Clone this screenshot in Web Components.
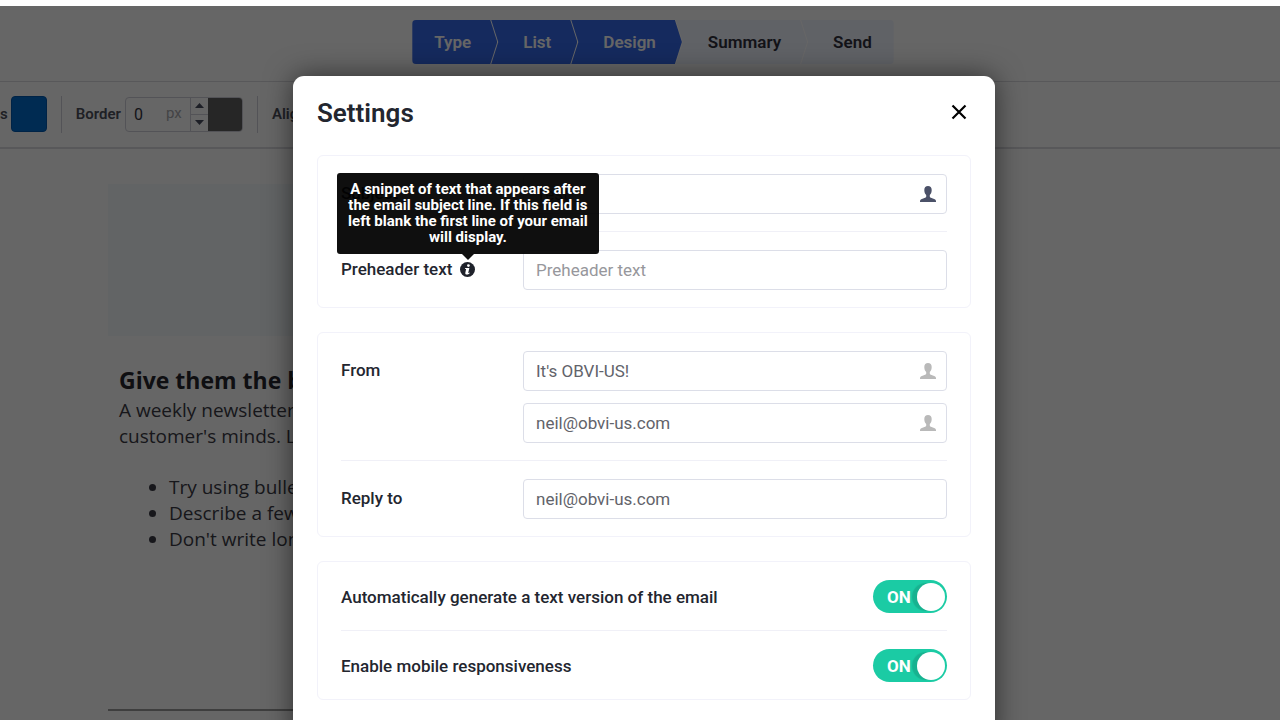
<!DOCTYPE html>
<html lang="en">
<head>
<meta charset="utf-8">
<title>Campaign settings</title>
<style>
  html, body { margin: 0; height: 100%; }
  body { font-family: Roboto, "Noto Sans", sans-serif; font-size: 17px; color: #23262f; background: #fff; overflow: hidden; }
</style>
</head>
<body>
<campaign-app>
  <step-nav slot="header">
    <step-item done first>Type</step-item>
    <step-item done>List</step-item>
    <step-item done>Design</step-item>
    <step-item>Summary</step-item>
    <step-item last>Send</step-item>
  </step-nav>
  <style-toolbar slot="toolbar"></style-toolbar>
  <email-canvas slot="canvas">
    <h1>Give them the b</h1>
    <p>A weekly newsletter<br>customer's minds. L</p>
    <ul>
      <li>Try using bulle</li>
      <li>Describe a few</li>
      <li>Don't write lon</li>
    </ul>
  </email-canvas>
  <settings-modal slot="modal" heading="Settings">
    <settings-card>
      <text-row label="Subject" value="Test" icon="dark"></text-row>
      <text-row label="Preheader text" placeholder="Preheader text">
        <info-tip slot="hint">A snippet of text that appears after the email subject line. If this field is left blank the first line of your email will display.</info-tip>
      </text-row>
    </settings-card>
    <settings-card>
      <text-row label="From" value="It's OBVI-US!" second="neil@obvi-us.com" icon="muted"></text-row>
      <text-row label="Reply to" value="neil@obvi-us.com"></text-row>
    </settings-card>
    <settings-card>
      <toggle-row label="Automatically generate a text version of the email"></toggle-row>
      <toggle-row label="Enable mobile responsiveness"></toggle-row>
    </settings-card>
  </settings-modal>
</campaign-app>

<script>
const define = (name, render) => customElements.define(name, class extends HTMLElement {
  connectedCallback() {
    if (this.shadowRoot) return;
    this.attachShadow({ mode: 'open' }).innerHTML = '<style>*{box-sizing:border-box}</style>' + render(this);
  }
});

define('campaign-app', () => `
  <style>
    :host { display: flex; flex-direction: column; height: 100vh; padding-top: 6px; box-sizing: border-box; overflow: hidden; }
    .app { position: relative; flex: 1; min-height: 0; overflow: hidden; }
    header { display: flex; justify-content: center; padding: 14px 0 17px 26px; border-bottom: 1px solid #dcdce0; }
    .overlay { position: absolute; inset: 0; background: rgba(0,0,0,.6); padding: 70px 24px 0 32px; }
  </style>
  <div class="app">
    <header><slot name="header"></slot></header>
    <slot name="toolbar"></slot>
    <main><slot name="canvas"></slot></main>
    <div class="overlay"><slot name="modal"></slot></div>
  </div>`);

define('step-nav', () => `
  <style>
    :host { display: block; }
    nav { display: flex; border-radius: 4px; overflow: hidden; }
  </style>
  <nav aria-label="Campaign steps"><slot></slot></nav>`);

define('step-item', () => `
  <style>
    :host { display: block; margin-left: -6px; }
    :host([first]) { margin-left: 0; }
    a { display: block; padding: 0 26px 0 32px; font-weight: 600; line-height: 44px; color: #30313c; background: #f1f4ff; text-decoration: none;
        clip-path: polygon(0 0, calc(100% - 7px) 0, 100% 50%, calc(100% - 7px) 100%, 0 100%, 7px 50%); }
    :host([done]) a { background: #3569eb; color: #fff; }
    :host([first]) a { padding-left: 22px; clip-path: polygon(0 0, calc(100% - 7px) 0, 100% 50%, calc(100% - 7px) 100%, 0 100%); }
    :host([last]) a { padding-right: 22px; clip-path: polygon(0 0, 100% 0, 100% 100%, 0 100%, 7px 50%); }
  </style>
  <a href="#"><slot></slot></a>`);

define('style-toolbar', () => `
  <style>
    :host { display: flex; align-items: center; height: 67px; box-sizing: border-box; padding-bottom: 1px; border-bottom: 2px solid #dcdce0; font-size: 15px; font-weight: 600; color: #4f525e; }
    .swatch { width: 36px; height: 36px; margin-left: 3px; padding: 0; border: 1px solid #0058b0; border-radius: 4px; background: #006bcd; }
    hr { width: 1px; height: 37px; margin: 0 14px; border: 0; background: #d0d0da; }
    label { margin-right: 4px; }
    .group { display: flex; height: 35px; border: 1px solid #d0d0da; border-radius: 4px; overflow: hidden; }
    input { width: 40px; padding: 0 0 0 8px; border: 0; background: none; font: 400 16px Roboto, sans-serif; color: #33353f; }
    .unit { width: 24px; font-weight: 400; line-height: 31px; color: #a9a9ae; }
    .spin { display: flex; flex-direction: column; width: 18px; border-left: 1px solid #d0d0da; }
    .spin button { flex: 1; display: grid; place-items: center; padding: 0; border: 0; background: none; }
    .spin button + button { border-top: 1px solid #d0d0da; }
    .color { width: 34px; padding: 0; border: 0; background: #5f5f5f; }
  </style>
  <span>s</span>
  <button class="swatch" aria-label="Background colour"></button>
  <hr>
  <label for="border">Border</label>
  <div class="group">
    <input id="border" value="0"><span class="unit">px</span>
    <div class="spin">
      <button aria-label="Increase"><svg width="9" height="5" viewBox="0 0 9 5"><path d="M4.500 0L9 5H0z" fill="#4a4e60"/></svg></button>
      <button aria-label="Decrease"><svg width="9" height="5" viewBox="0 0 9 5"><path d="M0 0H9L4.500 5z" fill="#4a4e60"/></svg></button>
    </div>
    <button class="color" aria-label="Border colour"></button>
  </div>
  <hr>
  <span>Align</span>`);

define('email-canvas', () => `
  <style>
    :host { display: block; max-width: 780px; margin: 35px 0 0 108px; font: 19px/26px "Open Sans", sans-serif; color: #3b3b45; }
    .hero { height: 152px; background: #f6f9fc; }
    .copy { padding: 30px 11px 0; }
    ::slotted(h1) { margin: 0; font-size: 23px; line-height: 28px; font-weight: 700; color: #26262e; }
    ::slotted(p) { margin: 3px 0 0; }
    ::slotted(ul) { margin: 25px 0 0; padding-left: 50px; }
    hr { height: 2px; margin: 157px 0 0; border: 0; background: #9c9c9c; }
  </style>
  <div class="hero"></div>
  <div class="copy"><slot></slot></div>
  <hr>`);

define('settings-modal', el => `
  <style>
    :host { display: block; max-width: 702px; margin: 0 auto; }
    section { padding: 0 24px 48px; border-radius: 11px; background: #fff; box-shadow: 0 0 28px rgba(0,0,0,.55); }
    header { display: flex; align-items: flex-start; justify-content: space-between; padding: 22px 0 26px; }
    h2 { margin: 0; font-size: 26px; line-height: 31px; font-weight: 600; }
    button { display: grid; place-items: center; width: 24px; height: 28px; padding: 0; border: 0; background: none; }
    .cards { display: grid; gap: 24px; }
  </style>
  <section role="dialog" aria-labelledby="title">
    <header>
      <h2 id="title">${el.getAttribute('heading')}</h2>
      <button aria-label="Close"><svg width="16" height="16" viewBox="0 0 16 16"><path d="M1.500 1.500 14.500 14.500M14.500 1.500 1.500 14.500" stroke="#000" stroke-width="2.200" fill="none"/></svg></button>
    </header>
    <div class="cards"><slot></slot></div>
  </section>`);

define('settings-card', () => `
  <style>
    :host { display: block; padding: 0 23px; border: 1px solid #f2f2fa; border-radius: 6px; }
    ::slotted(:not(:last-child)) { border-bottom: 1px solid #f0f0f7; }
  </style>
  <slot></slot>`);

const person = `<svg width="16" height="16" viewBox="0 0 16 16" aria-hidden="true"><path fill="currentColor" d="M8 0C5.700 0 4.300 1.500 4.300 4c0 2.100.7 4 1.900 5v1.700c-.2.8-1.300 1.200-3 1.700C1.200 13 0 13.800 0 15.200V16h16v-.8c0-1.400-1.200-2.200-3.200-2.800-1.700-.5-2.800-.9-3-1.700V9c1.200-1 1.900-2.900 1.900-5C11.700 1.500 10.300 0 8 0z"/></svg>`;

define('text-row', el => {
  const get = name => el.getAttribute(name) || '';
  const icon = el.hasAttribute('icon') ? `<button aria-label="Insert contact field">${person}</button>` : '';
  const box = (attrs, value) => `<div class="box"><input type="text" ${attrs} value="${value}" placeholder="${get('placeholder')}">${icon}</div>`;
  return `
  <style>
    :host { display: grid; grid-template-columns: 182px 1fr; padding: 18px 0 17px; }
    .name { display: flex; align-items: center; gap: 8px; height: 38px; font-weight: 500; }
    .boxes { display: grid; gap: 12px; }
    .box { display: flex; align-items: center; height: 40px; border: 1px solid #dcdee8; border-radius: 4px; }
    input { flex: 1; min-width: 0; height: 100%; padding: 0 12px; border: 0; background: none; outline: 0; font: 400 17px Roboto, sans-serif; color: #62636a; }
    input::placeholder { color: #97979c; opacity: 1; }
    button { display: grid; margin-right: 10px; padding: 0; border: 0; background: none; color: #4b5168; }
    :host([icon="muted"]) button { color: #b9b9b9; }
  </style>
  <div class="name"><label for="field">${get('label')}</label><slot name="hint"></slot></div>
  <div class="boxes">${box('id="field"', get('value'))}${el.hasAttribute('second') ? box(`aria-label="${get('label')} address"`, get('second')) : ''}</div>`;
});

define('info-tip', () => `
  <style>
    :host { display: block; position: relative; height: 15px; }
    button { display: block; padding: 0; border: 0; background: none; }
    svg { display: block; }
    .tip { position: absolute; z-index: 2; bottom: calc(100% + 8px); left: 50%; transform: translateX(-50%); width: 262px; padding: 8px 8px 9px;
           border-radius: 3px; background: rgba(0,0,0,.94); color: #fff; font-size: 15px; line-height: 16px; font-weight: 700; text-align: center; }
    .tip::after { content: ""; position: absolute; top: 100%; left: 50%; margin-left: -6px; border: 6px solid transparent; border-top-color: rgba(0,0,0,.94); border-bottom: 0; }
  </style>
  <button aria-label="About this field" aria-describedby="tip"><svg width="15" height="15" viewBox="0 0 15 15"><circle cx="7.500" cy="7.500" r="7.500" fill="#1f222b"/><circle cx="8.400" cy="3.600" r="1.400" fill="#fff"/><path d="M5.200 5.900h4.200L8.300 10.600c-.1.500.4.400 1.100-.2l.4.500c-.9 1-2 1.500-3 1.500-1.200 0-1.700-.6-1.500-1.500L6.100 7H5z" fill="#fff"/></svg></button>
  <div class="tip" id="tip" role="tooltip"><slot></slot></div>`);

define('toggle-row', el => `
  <style>
    :host { display: flex; align-items: center; justify-content: space-between; padding: 18px 0 17px; font-weight: 500; }
    .switch { display: grid; width: 74px; height: 33px; }
    .switch > * { grid-area: 1 / 1; }
    input { appearance: none; display: flex; align-items: center; justify-content: flex-end; margin: 0; padding: 0 2px; border-radius: 17px; background: #1bcba4; overflow: hidden; }
    input::after { content: ""; width: 28px; height: 28px; border-radius: 50%; background: #fff; box-shadow: -5px 0 1px rgba(0,0,0,.12); }
    .state { align-self: center; padding-left: 14px; color: #fff; font-weight: 700; pointer-events: none; }
  </style>
  <label for="toggle">${el.getAttribute('label')}</label>
  <div class="switch"><input id="toggle" type="checkbox" role="switch" checked><span class="state" aria-hidden="true">ON</span></div>`);
</script>
</body>
</html>
